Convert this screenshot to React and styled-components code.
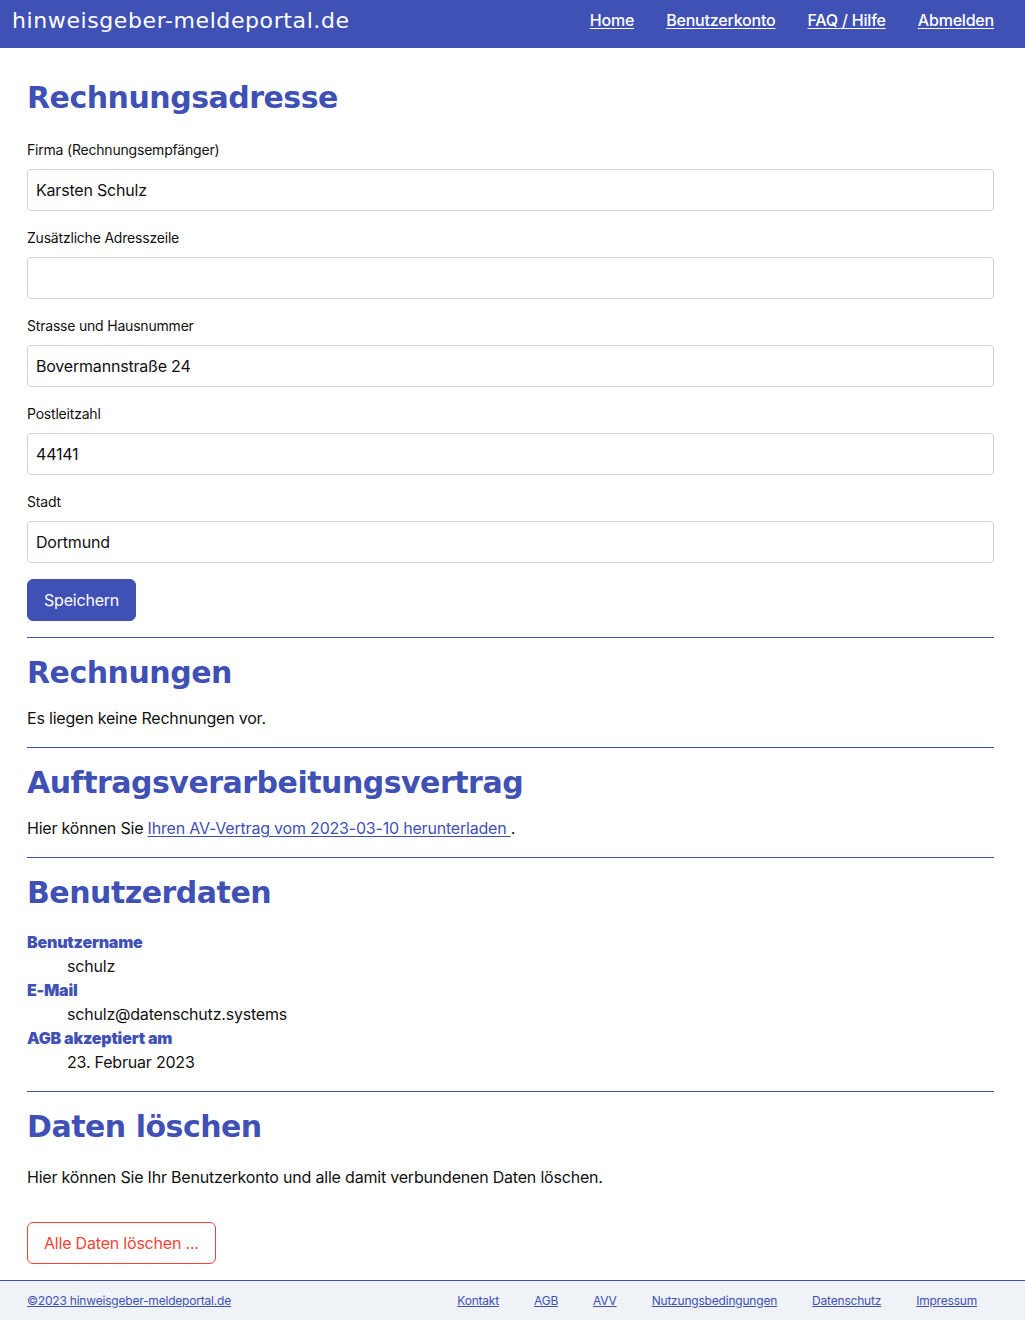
import React from 'react'
import styled, { createGlobalStyle } from 'styled-components'

const GlobalStyle = createGlobalStyle`
  body {
    margin: 0;
    font-family: Inter, "Liberation Sans", sans-serif;
    letter-spacing: -0.2px;
    color: #111;
    background: #fff;
  }
`

const Header = styled.header`
  height: 48px;
  background: #3f51b5;
  display: flex;
  align-items: flex-start;
  justify-content: space-between;
  padding: 0 31px 0 12px;
`

const Logo = styled.a`
  font-family: "DejaVu Sans", sans-serif;
  font-size: 22px;
  color: #fff;
  text-decoration: none;
  line-height: 42px;
  letter-spacing: 0.6px;
`

const Nav = styled.nav`
  display: flex;
  gap: 32px;
  line-height: 40px;
`

const NavLink = styled.a`
  color: #fff;
  font-size: 16px;
  font-weight: 500;
  text-decoration: underline;
  text-underline-offset: 2px;
`

const Main = styled.main`
  padding: 0 31px 0 27px;
  display: flex;
  flex-direction: column;
`

const Title = styled.h2`
  font-family: "DejaVu Sans", sans-serif;
  font-size: 30px;
  line-height: 40px;
  font-weight: 700;
  color: #3f51b5;
  margin: ${p => p.$top ?? 15}px 0 ${p => p.$bottom ?? 13}px;
  letter-spacing: -0.5px;
`

const Field = styled.div`
  display: flex;
  flex-direction: column;
  gap: 9px;
  margin-bottom: 17px;
`

const Label = styled.label`
  font-size: 14px;
  line-height: 20px;
`

const Input = styled.input`
  height: 42px;
  box-sizing: border-box;
  border: 1px solid #cfd1d4;
  border-radius: 4px;
  padding: 0 8px;
  font-family: inherit;
  letter-spacing: inherit;
  font-size: 16px;
  color: #111;
  outline: none;
`

const Button = styled.button`
  align-self: flex-start;
  height: 42px;
  padding: 0 16px;
  border-radius: 6px;
  font-family: inherit;
  letter-spacing: inherit;
  font-size: 16px;
  cursor: pointer;
  border: 1px solid ${p => (p.$danger ? '#f44336' : '#3f51b5')};
  background: ${p => (p.$danger ? '#fff' : '#3f51b5')};
  color: ${p => (p.$danger ? '#f44336' : '#fff')};
  margin-top: ${p => p.$top ?? 0}px;
`

const Rule = styled.div`
  height: 1px;
  background: #3f51b5;
  margin-top: ${p => p.$top ?? 17}px;
`

const Text = styled.p`
  font-size: 16px;
  line-height: 24px;
  margin: 0;
`

const TextLink = styled.a`
  color: #3f51b5;
  text-decoration: underline;
  text-underline-offset: 2px;
`

const DataList = styled.dl`
  margin: 17px 0 0;
  font-size: 16px;
  line-height: 24px;
`

const Term = styled.dt`
  color: #3f51b5;
  font-weight: 900;
`

const Detail = styled.dd`
  margin: 0 0 0 40px;
`

const Footer = styled.footer`
  margin-top: 16px;
  height: 40px;
  box-sizing: border-box;
  border-top: 1px solid #3f51b5;
  background: #eff2f7;
  display: flex;
  align-items: center;
  justify-content: space-between;
  padding: 0 48px 0 27px;
  font-size: 12px;
`

const FooterLinks = styled.div`
  display: flex;
  gap: 35px;
`

const FooterLink = styled.a`
  color: #3f51b5;
  text-decoration: underline;
`

const fields = [
  ['Firma (Rechnungsempfänger)', 'Karsten Schulz'],
  ['Zusätzliche Adresszeile', ''],
  ['Strasse und Hausnummer', 'Bovermannstraße 24'],
  ['Postleitzahl', '44141'],
  ['Stadt', 'Dortmund'],
]

const userData = [
  ['Benutzername', 'schulz'],
  ['E-Mail', 'schulz@datenschutz.systems'],
  ['AGB akzeptiert am', '23. Februar 2023'],
]

const footerLinks = ['Kontakt', 'AGB', 'AVV', 'Nutzungsbedingungen', 'Datenschutz', 'Impressum']

export default function App() {
  return (
    <>
      <GlobalStyle />
      <Header>
        <Logo href="#">hinweisgeber-meldeportal.de</Logo>
        <Nav>
          <NavLink href="#">Home</NavLink>
          <NavLink href="#">Benutzerkonto</NavLink>
          <NavLink href="#">FAQ / Hilfe</NavLink>
          <NavLink href="#">Abmelden</NavLink>
        </Nav>
      </Header>
      <Main>
        <Title $top={30} $bottom={22}>Rechnungsadresse</Title>
        {fields.map(([label, value]) => (
          <Field key={label}>
            <Label>{label}</Label>
            <Input defaultValue={value} />
          </Field>
        ))}
        <Button $top={-1}>Speichern</Button>
        <Rule $top={16} />

        <Title>Rechnungen</Title>
        <Text>Es liegen keine Rechnungen vor.</Text>
        <Rule />

        <Title>Auftragsverarbeitungsvertrag</Title>
        <Text>
          Hier können Sie <TextLink href="#">Ihren AV-Vertrag vom 2023-03-10 herunterladen </TextLink>.
        </Text>
        <Rule />

        <Title $bottom={0}>Benutzerdaten</Title>
        <DataList>
          {userData.map(([term, detail]) => (
            <React.Fragment key={term}>
              <Term>{term}</Term>
              <Detail>{detail}</Detail>
            </React.Fragment>
          ))}
        </DataList>
        <Rule />

        <Title $bottom={18}>Daten löschen</Title>
        <Text>Hier können Sie Ihr Benutzerkonto und alle damit verbundenen Daten löschen.</Text>
        <Button $danger $top={33}>Alle Daten löschen ...</Button>
      </Main>
      <Footer>
        <FooterLink href="#">©2023 hinweisgeber-meldeportal.de</FooterLink>
        <FooterLinks>
          {footerLinks.map(l => (
            <FooterLink key={l} href="#">{l}</FooterLink>
          ))}
        </FooterLinks>
      </Footer>
    </>
  )
}
